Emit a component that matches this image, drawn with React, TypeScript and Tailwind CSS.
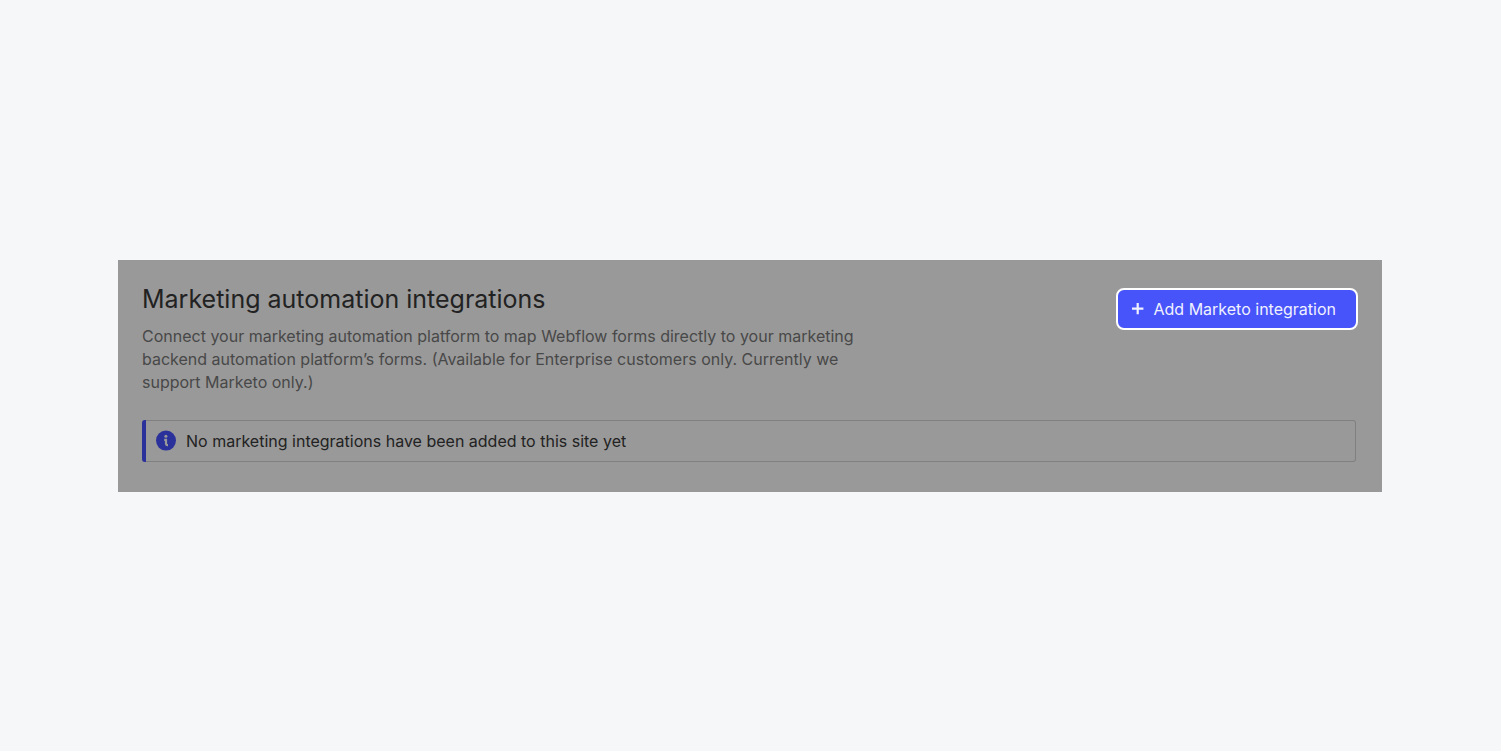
import { ReactNode } from "react";

function PlusIcon() {
  return (
    <svg
      viewBox="0 0 12 12"
      className="w-3 h-3"
      fill="none"
      stroke="currentColor"
      strokeWidth="2.2"
      aria-hidden="true"
    >
      <path d="M5.7 0v11.2M0 5.6h11.4" />
    </svg>
  );
}

function InfoIcon() {
  return (
    <svg
      viewBox="0 0 20 20"
      className="w-5 h-5 shrink-0 overflow-visible"
      aria-hidden="true"
    >
      <circle cx="10" cy="9.6" r="10" fill="#2b319a" />
      <circle cx="9.9" cy="5.2" r="1.5" fill="#999999" />
      <path
        d="M8.2 8.9H10v3.9q0 1.3 1.2 1.3h.8"
        fill="none"
        stroke="#999999"
        strokeWidth="2.2"
      />
    </svg>
  );
}

function Notice({ children }: { children: ReactNode }) {
  return (
    <div
      role="status"
      className="flex items-stretch h-[42px] rounded-[3px] border border-l-0 border-[#808080]"
    >
      <div className="w-1 -my-px rounded-l-[3px] bg-[#2b319a]" />
      <div className="flex items-center gap-2.5 pl-2.5 text-[#222222]">
        <InfoIcon />
        <p>{children}</p>
      </div>
    </div>
  );
}

export default function App() {
  return (
    <main className="min-h-screen bg-[#f5f7f9] pt-[260px] pl-[118px] pr-[119px] font-['Inter',sans-serif] text-base">
      <section className="bg-[#999999] px-6 pt-[21px] pb-[30px]">
        <div className="flex items-start justify-between">
          <div className="max-w-[740px]">
            <h1 className="text-[25px] leading-9 text-[#222222]">
              Marketing automation integrations
            </h1>
            <p className="mt-2 leading-[23px] text-[#484848]">
              Connect your marketing automation platform to map Webflow forms
              directly to your marketing backend automation platform’s forms.
              (Available for Enterprise customers only. Currently we support
              Marketo only.)
            </p>
          </div>
          <button
            type="button"
            className="flex items-center gap-2.5 h-[42px] mt-[7px] pl-3.5 pr-5 rounded-lg border-2 border-white bg-[#4654fa] text-[#f0f1ff] whitespace-nowrap cursor-pointer"
          >
            <PlusIcon />
            Add Marketo integration
          </button>
        </div>
        <div className="mt-[26px] mr-0.5">
          <Notice>No marketing integrations have been added to this site yet</Notice>
        </div>
      </section>
    </main>
  );
}
